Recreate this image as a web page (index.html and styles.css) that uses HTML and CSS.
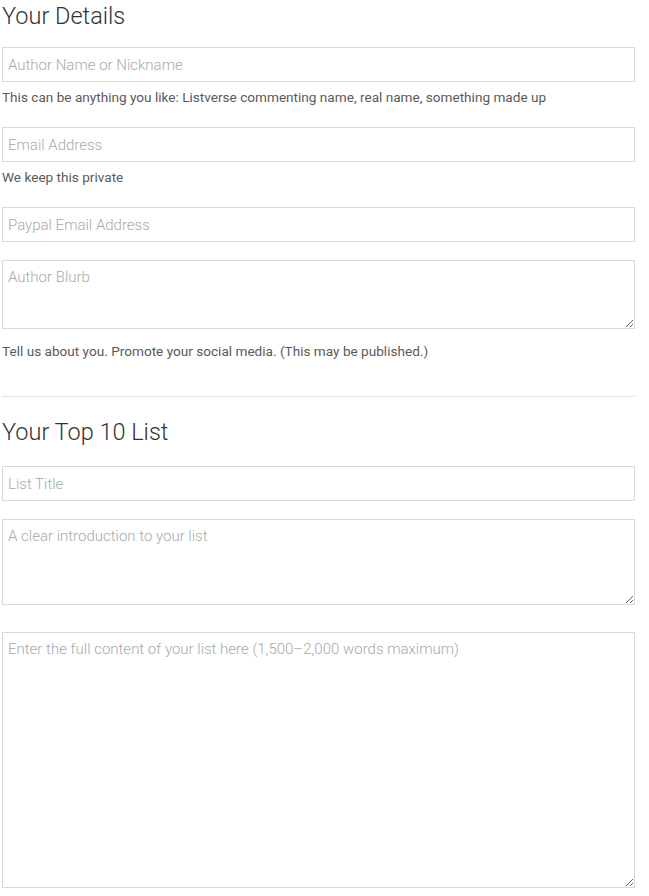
FILE: index.html
```html
<!DOCTYPE html>
<html lang="en">
<head>
<meta charset="utf-8">
<title>Submit a List</title>
<link rel="stylesheet" href="styles.css">
</head>
<body>
<form class="form">
  <h2 class="heading">Your Details</h2>
  <div class="group">
    <input class="field" type="text" placeholder="Author Name or Nickname">
    <p class="help">This can be anything you like: Listverse commenting name, real name, something made up</p>
  </div>
  <div class="group">
    <input class="field" type="email" placeholder="Email Address">
    <p class="help">We keep this private</p>
  </div>
  <div class="group group-tight">
    <input class="field" type="email" placeholder="Paypal Email Address">
  </div>
  <div class="group group-last">
    <textarea class="field area area-blurb" placeholder="Author Blurb"></textarea>
    <p class="help help-area">Tell us about you. Promote your social media. (This may be published.)</p>
  </div>
  <hr class="divider">
  <h2 class="heading heading-second">Your Top 10 List</h2>
  <div class="group group-tight">
    <input class="field" type="text" placeholder="List Title">
  </div>
  <div class="group group-intro">
    <textarea class="field area area-intro" placeholder="A clear introduction to your list"></textarea>
  </div>
  <div class="group">
    <textarea class="field area area-content" placeholder="Enter the full content of your list here (1,500–2,000 words maximum)"></textarea>
  </div>
</form>
</body>
</html>
```
FILE: styles.css
```css
html, body {
  margin: 0;
  padding: 0;
  background: #ffffff;
}
body {
  font-family: Roboto, "Liberation Sans", sans-serif;
  color: #444;
}
.form {
  width: 633px;
  padding: 0 0 0 2px;
}
.heading {
  margin: 0 0 15px;
  font-size: 23.5px;
  line-height: 32px;
  font-weight: 300;
  color: #333;
}
.heading-second {
  margin-top: 19px;
  margin-bottom: 18px;
}
.group {
  margin: 0 0 19px;
}
.group-tight {
  margin-bottom: 18px;
}
.group-last {
  margin-bottom: 34px;
}
.group-intro {
  margin-bottom: 27px;
}
.field {
  display: block;
  box-sizing: border-box;
  width: 633px;
  height: 35px;
  margin: 0;
  padding: 0 5px;
  border: 1px solid #dadada;
  border-radius: 0;
  background: #fff;
  font-family: Roboto, "Liberation Sans", sans-serif;
  font-size: 15px;
  font-weight: 300;
  color: #333;
  outline: none;
}
.field::placeholder {
  color: #a9a9a9;
  opacity: 1;
}
.area {
  padding: 6px 5px;
  resize: vertical;
  line-height: 20px;
}
.area-blurb { height: 69px; }
.area-intro { height: 86px; }
.area-content { height: 256px; }
.help {
  margin: 4px 0 0;
  font-size: 13.6px;
  line-height: 22px;
  font-weight: 400;
  color: #5a5a5a;
}
.help-area {
  margin-top: 11px;
}
.divider {
  margin: 0;
  border: 0;
  border-top: 1px solid #e3e3e3;
  width: 633px;
}
```
